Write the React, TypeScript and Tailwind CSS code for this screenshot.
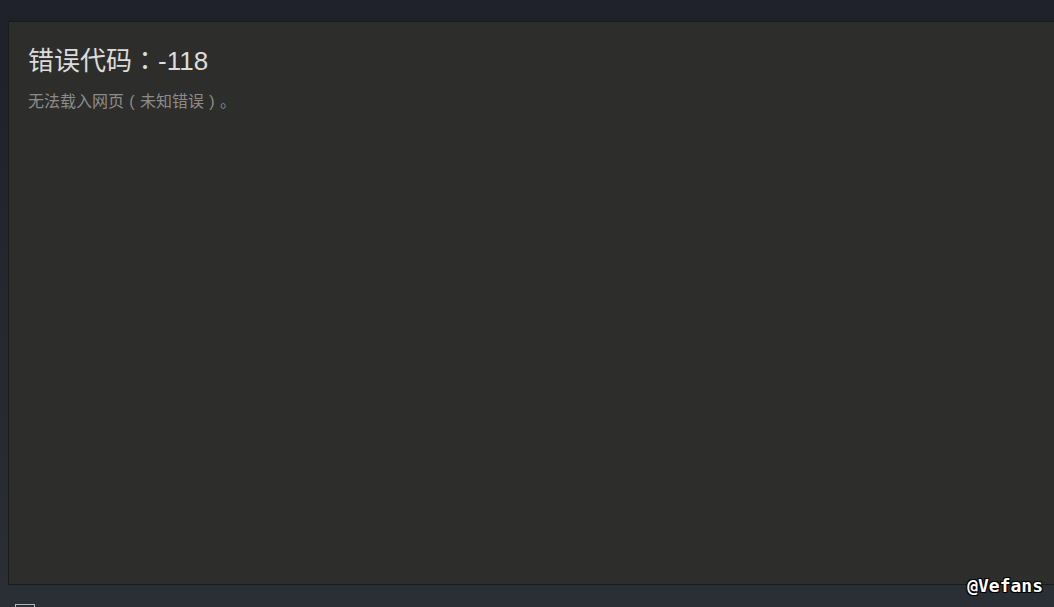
import React from 'react';

export default function App() {
  return (
    <div className="relative h-[607px] w-[1054px] overflow-hidden bg-gradient-to-b from-[#1e2129] to-[#2a2e35] font-['Liberation_Sans','Noto_Sans_CJK_SC',sans-serif] [text-spacing-trim:space-all]">
      <div className="pl-2 pt-[21px]">
        <div className="h-[564px] w-[1060px] border border-[#1a1a1a] bg-[#2d2d2b] px-[19px] pt-[20px]">
          <h1 className="text-[26px] leading-[34px] text-[#dcdcdc]">
            错误代码<span className="font-['Noto_Sans_CJK_JP',sans-serif]">：</span>-118
          </h1>
          <p className="mt-[13px] text-[16px] leading-[22px] text-[#8c8c8c]">
            无法载入网页<span className="inline-block w-4 text-center">(</span>未知错误
            <span className="inline-block w-4 text-center">)</span>。
          </p>
        </div>
      </div>
      <div className="ml-[15px] mt-[19px] h-[20px] w-[20px] border border-[#b5b5b5]" />
      <div className="absolute right-[11px] top-[574px] font-['DejaVu_Sans_Mono',monospace] text-[18px] font-bold leading-[24px] text-white [text-shadow:1px_1px_0_#000,-1px_-1px_0_#000,1px_-1px_0_#000,-1px_1px_0_#000]">
        @Vefans
      </div>
    </div>
  );
}
